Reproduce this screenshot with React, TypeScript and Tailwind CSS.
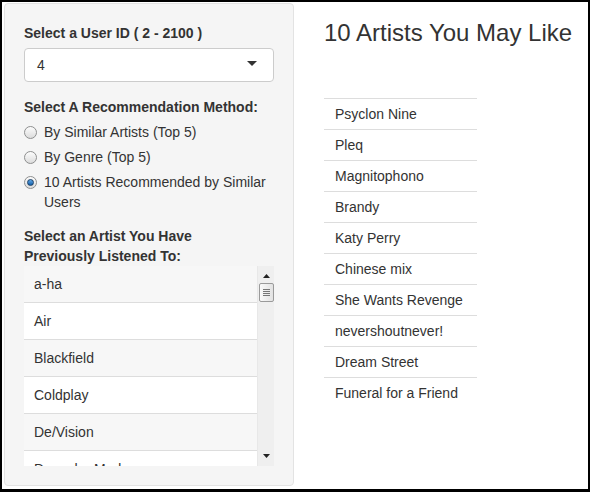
import React from 'react';

const artists = ['a-ha', 'Air', 'Blackfield', 'Coldplay', 'De/Vision', 'Depeche Mode'];

const recommended = [
  'Psyclon Nine',
  'Pleq',
  'Magnitophono',
  'Brandy',
  'Katy Perry',
  'Chinese mix',
  'She Wants Revenge',
  'nevershoutnever!',
  'Dream Street',
  'Funeral for a Friend',
];

const methods = ['By Similar Artists (Top 5)', 'By Genre (Top 5)', '10 Artists Recommended by Similar Users'];

function Radio({ checked }: { checked: boolean }) {
  return (
    <span className="mt-[4px] flex h-[13px] w-[13px] shrink-0 items-center justify-center rounded-full border border-[#8e8f8f] bg-gradient-to-b from-[#fcfcfc] to-[#dcdcdc]">
      {checked && (
        <span className="h-[7px] w-[7px] rounded-full border border-[#1a3f66] bg-gradient-to-b from-[#5fa8e8] to-[#0f5ea8]" />
      )}
    </span>
  );
}

function Scrollbar() {
  return (
    <div className="flex w-[17px] shrink-0 flex-col items-center border-l border-[#e8e8e8] bg-[#efefef]">
      <svg width="7" height="4" viewBox="0 0 7 4" className="mt-[8px]">
        <path d="M3.5 0 L7 4 L0 4 Z" fill="#222" />
      </svg>
      <div className="mt-[5px] flex h-[19px] w-[15px] flex-col items-center justify-center gap-[1px] rounded-[2px] border border-[#9a9a9a] bg-gradient-to-r from-[#fafafa] to-[#e2e2e2]">
        <span className="h-[1px] w-[7px] bg-[#777]" />
        <span className="h-[1px] w-[7px] bg-[#777]" />
        <span className="h-[1px] w-[7px] bg-[#777]" />
        <span className="h-[1px] w-[7px] bg-[#777]" />
      </div>
      <div className="flex-1" />
      <svg width="7" height="4" viewBox="0 0 7 4" className="mb-[8px]">
        <path d="M0 0 L7 0 L3.5 4 Z" fill="#222" />
      </svg>
    </div>
  );
}

export default function App() {
  return (
    <div className="h-[492px] w-[590px] bg-black pb-[3px] pl-[2px] pr-[2px] pt-[2px] font-['Liberation_Sans',Arial,sans-serif] text-[14px] leading-[20px] text-[#333]">
      <div className="flex h-full bg-white">
        <aside className="ml-[2px] mt-[1px] h-[483px] w-[290px] shrink-0 overflow-hidden rounded-[4px] border border-[#e3e3e3] bg-[#f5f5f5] p-[19px]">
          <label className="mb-[5px] block font-bold">Select a User ID ( 2 - 2100 )</label>
          <div className="flex h-[34px] items-center justify-between rounded-[4px] border border-[#ccc] bg-white pl-[12px] pr-[16px]">
            <span className="-mt-[1px]">4</span>
            <svg width="10" height="5" viewBox="0 0 10 5" className="-mt-[3px]">
              <path d="M0 0 L10 0 L5 5 Z" fill="#333" />
            </svg>
          </div>

          <label className="mb-[5px] mt-[15px] block font-bold">Select A Recommendation Method:</label>
          <div className="flex flex-col gap-[5px]">
            {methods.map((m, i) => (
              <div key={m} className="flex gap-[7px]">
                <Radio checked={i === 2} />
                <span>{m}</span>
              </div>
            ))}
          </div>

          <label className="mt-[14px] block font-bold">
            Select an Artist You Have
            <br />
            Previously Listened To:
          </label>
          <div className="flex h-[200px] overflow-hidden">
            <ul className="flex-1 overflow-hidden">
              {artists.map((a, i) => (
                <li
                  key={a}
                  className={`border-b border-[#ddd] px-[10px] py-[8px] ${i % 2 === 0 ? 'bg-[#f7f7f7]' : 'bg-white'}`}
                >
                  {a}
                </li>
              ))}
            </ul>
            <Scrollbar />
          </div>
        </aside>

        <main className="ml-[30px]">
          <h3 className="mt-[18px] text-[24px] font-normal leading-[26px]">10 Artists You May Like</h3>
          <table className="mt-[52px] w-[153px] border-collapse">
            <tbody>
              {recommended.map((r) => (
                <tr key={r} className="border-t border-[#ddd]">
                  <td className="py-[5px] pl-[11px] pr-[5px] whitespace-nowrap">{r}</td>
                </tr>
              ))}
            </tbody>
          </table>
        </main>
      </div>
    </div>
  );
}
